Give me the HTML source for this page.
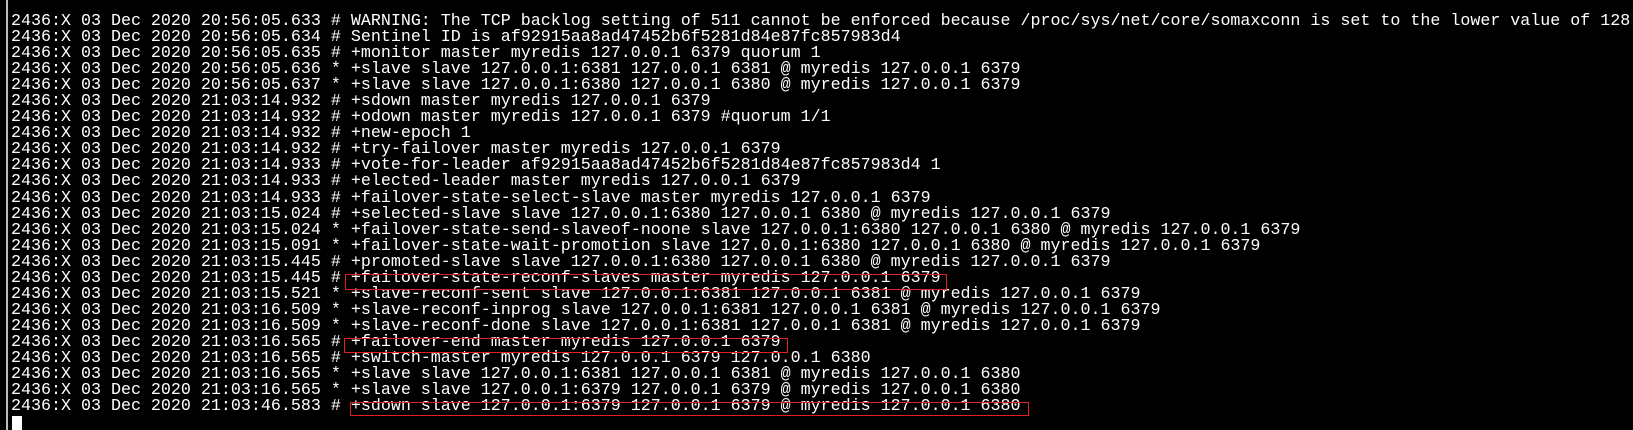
<!DOCTYPE html>
<html><head><style>
html,body{margin:0;padding:0;background:#000;width:1633px;height:430px;overflow:hidden}
.b{position:absolute;left:6px;top:0;width:2px;height:430px;background:#bdbdbd}
pre{position:absolute;left:11px;top:14px;margin:0;font-family:"Liberation Mono",monospace;font-size:16.67px;line-height:16.05px;color:#fff;white-space:pre}
.r{position:absolute;border:1.5px solid #e02020;box-sizing:border-box}
.c{position:absolute;left:12px;top:416px;width:10px;height:14px;background:#fff}
</style></head><body>
<div class="b"></div>
<pre>2436:X 03 Dec 2020 20:56:05.633 # WARNING: The TCP backlog setting of 511 cannot be enforced because /proc/sys/net/core/somaxconn is set to the lower value of 128.
2436:X 03 Dec 2020 20:56:05.634 # Sentinel ID is af92915aa8ad47452b6f5281d84e87fc857983d4
2436:X 03 Dec 2020 20:56:05.635 # +monitor master myredis 127.0.0.1 6379 quorum 1
2436:X 03 Dec 2020 20:56:05.636 * +slave slave 127.0.0.1:6381 127.0.0.1 6381 @ myredis 127.0.0.1 6379
2436:X 03 Dec 2020 20:56:05.637 * +slave slave 127.0.0.1:6380 127.0.0.1 6380 @ myredis 127.0.0.1 6379
2436:X 03 Dec 2020 21:03:14.932 # +sdown master myredis 127.0.0.1 6379
2436:X 03 Dec 2020 21:03:14.932 # +odown master myredis 127.0.0.1 6379 #quorum 1/1
2436:X 03 Dec 2020 21:03:14.932 # +new-epoch 1
2436:X 03 Dec 2020 21:03:14.932 # +try-failover master myredis 127.0.0.1 6379
2436:X 03 Dec 2020 21:03:14.933 # +vote-for-leader af92915aa8ad47452b6f5281d84e87fc857983d4 1
2436:X 03 Dec 2020 21:03:14.933 # +elected-leader master myredis 127.0.0.1 6379
2436:X 03 Dec 2020 21:03:14.933 # +failover-state-select-slave master myredis 127.0.0.1 6379
2436:X 03 Dec 2020 21:03:15.024 # +selected-slave slave 127.0.0.1:6380 127.0.0.1 6380 @ myredis 127.0.0.1 6379
2436:X 03 Dec 2020 21:03:15.024 * +failover-state-send-slaveof-noone slave 127.0.0.1:6380 127.0.0.1 6380 @ myredis 127.0.0.1 6379
2436:X 03 Dec 2020 21:03:15.091 * +failover-state-wait-promotion slave 127.0.0.1:6380 127.0.0.1 6380 @ myredis 127.0.0.1 6379
2436:X 03 Dec 2020 21:03:15.445 # +promoted-slave slave 127.0.0.1:6380 127.0.0.1 6380 @ myredis 127.0.0.1 6379
2436:X 03 Dec 2020 21:03:15.445 # +failover-state-reconf-slaves master myredis 127.0.0.1 6379
2436:X 03 Dec 2020 21:03:15.521 * +slave-reconf-sent slave 127.0.0.1:6381 127.0.0.1 6381 @ myredis 127.0.0.1 6379
2436:X 03 Dec 2020 21:03:16.509 * +slave-reconf-inprog slave 127.0.0.1:6381 127.0.0.1 6381 @ myredis 127.0.0.1 6379
2436:X 03 Dec 2020 21:03:16.509 * +slave-reconf-done slave 127.0.0.1:6381 127.0.0.1 6381 @ myredis 127.0.0.1 6379
2436:X 03 Dec 2020 21:03:16.565 # +failover-end master myredis 127.0.0.1 6379
2436:X 03 Dec 2020 21:03:16.565 # +switch-master myredis 127.0.0.1 6379 127.0.0.1 6380
2436:X 03 Dec 2020 21:03:16.565 * +slave slave 127.0.0.1:6381 127.0.0.1 6381 @ myredis 127.0.0.1 6380
2436:X 03 Dec 2020 21:03:16.565 * +slave slave 127.0.0.1:6379 127.0.0.1 6379 @ myredis 127.0.0.1 6380
2436:X 03 Dec 2020 21:03:46.583 # +sdown slave 127.0.0.1:6379 127.0.0.1 6379 @ myredis 127.0.0.1 6380</pre>
<div class="r" style="left:345px;top:274px;width:602px;height:16px"></div>
<div class="r" style="left:344px;top:338px;width:444px;height:15px"></div>
<div class="r" style="left:350px;top:402px;width:679px;height:14px"></div>
<div class="c"></div>
</body></html>
